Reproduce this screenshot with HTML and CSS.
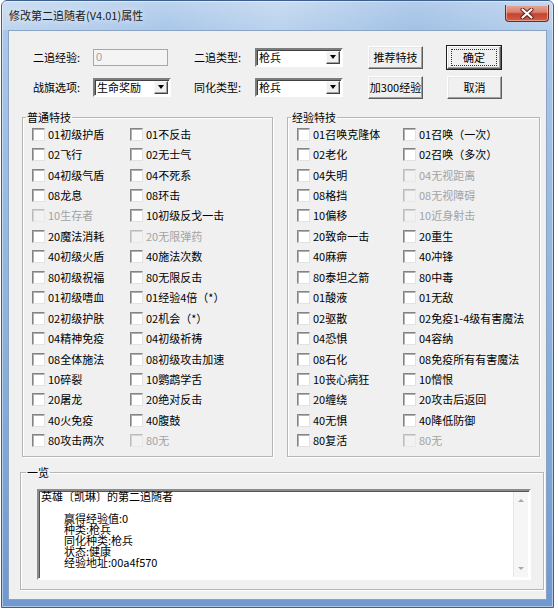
FILE: index.html
```html
<!DOCTYPE html>
<html>
<head>
    <meta charset="utf-8">
    <title>修改第二追随者(V4.01)属性</title>
    <link rel="stylesheet" href="styles.css">
</head>
<body>
<div class="window">
    <div class="titlebar">
        <span class="title">修改第二追随者(V4.01)属性</span>
        <span class="close">
            <svg width="14" height="11" viewBox="0 0 14 11">
                <path d="M2.5 1.5 L11.5 9.5 M11.5 1.5 L2.5 9.5" stroke="#5a1a12" stroke-width="4" stroke-linecap="round"/>
                <path d="M2.5 1.5 L11.5 9.5 M11.5 1.5 L2.5 9.5" stroke="#fff" stroke-width="2.2" stroke-linecap="round"/>
            </svg>
        </span>
    </div>

    <div class="client">
        <div class="top-rows">
            <span class="lbl">二追经验:</span>
            <div class="edit disabled">0</div>
            <span class="lbl">二追类型:</span>
            <div class="combo wide"><span class="val">枪兵</span><span class="drop"><i></i></span></div>
            <button class="btn">推荐特技</button>
            <button class="btn default"><span class="focus">确定</span></button>

            <span class="lbl">战旗选项:</span>
            <div class="combo"><span class="val">生命奖励</span><span class="drop"><i></i></span></div>
            <span class="lbl">同化类型:</span>
            <div class="combo wide"><span class="val">枪兵</span><span class="drop"><i></i></span></div>
            <button class="btn">加300经验</button>
            <button class="btn">取消</button>
        </div>

        <div class="groups">
            <fieldset class="group normal">
                <legend>普通特技</legend>
                <div class="checks">
                    <label class="chk"><span class="box"></span>01初级护盾</label>
                    <label class="chk"><span class="box"></span>01不反击</label>
                    <label class="chk"><span class="box"></span>02飞行</label>
                    <label class="chk"><span class="box"></span>02无士气</label>
                    <label class="chk"><span class="box"></span>04初级气盾</label>
                    <label class="chk"><span class="box"></span>04不死系</label>
                    <label class="chk"><span class="box"></span>08龙息</label>
                    <label class="chk"><span class="box"></span>08环击</label>
                    <label class="chk off"><span class="box"></span>10生存者</label>
                    <label class="chk"><span class="box"></span>10初级反戈一击</label>
                    <label class="chk"><span class="box"></span>20魔法消耗</label>
                    <label class="chk off"><span class="box"></span>20无限弹药</label>
                    <label class="chk"><span class="box"></span>40初级火盾</label>
                    <label class="chk"><span class="box"></span>40施法次数</label>
                    <label class="chk"><span class="box"></span>80初级祝福</label>
                    <label class="chk"><span class="box"></span>80无限反击</label>
                    <label class="chk"><span class="box"></span>01初级嗜血</label>
                    <label class="chk"><span class="box"></span>01经验4倍（*）</label>
                    <label class="chk"><span class="box"></span>02初级护肤</label>
                    <label class="chk"><span class="box"></span>02机会（*）</label>
                    <label class="chk"><span class="box"></span>04精神免疫</label>
                    <label class="chk"><span class="box"></span>04初级祈祷</label>
                    <label class="chk"><span class="box"></span>08全体施法</label>
                    <label class="chk"><span class="box"></span>08初级攻击加速</label>
                    <label class="chk"><span class="box"></span>10碎裂</label>
                    <label class="chk"><span class="box"></span>10鹦鹉学舌</label>
                    <label class="chk"><span class="box"></span>20屠龙</label>
                    <label class="chk"><span class="box"></span>20绝对反击</label>
                    <label class="chk"><span class="box"></span>40火免疫</label>
                    <label class="chk"><span class="box"></span>40腹鼓</label>
                    <label class="chk"><span class="box"></span>80攻击两次</label>
                    <label class="chk off"><span class="box"></span>80无</label>
                </div>
            </fieldset>

            <fieldset class="group exp">
                <legend>经验特技</legend>
                <div class="checks">
                    <label class="chk"><span class="box"></span>01召唤克隆体</label>
                    <label class="chk"><span class="box"></span>01召唤（一次）</label>
                    <label class="chk"><span class="box"></span>02老化</label>
                    <label class="chk"><span class="box"></span>02召唤（多次）</label>
                    <label class="chk"><span class="box"></span>04失明</label>
                    <label class="chk off"><span class="box"></span>04无视距离</label>
                    <label class="chk"><span class="box"></span>08格挡</label>
                    <label class="chk off"><span class="box"></span>08无视障碍</label>
                    <label class="chk"><span class="box"></span>10偏移</label>
                    <label class="chk off"><span class="box"></span>10近身射击</label>
                    <label class="chk"><span class="box"></span>20致命一击</label>
                    <label class="chk"><span class="box"></span>20重生</label>
                    <label class="chk"><span class="box"></span>40麻痹</label>
                    <label class="chk"><span class="box"></span>40冲锋</label>
                    <label class="chk"><span class="box"></span>80泰坦之箭</label>
                    <label class="chk"><span class="box"></span>80中毒</label>
                    <label class="chk"><span class="box"></span>01酸液</label>
                    <label class="chk"><span class="box"></span>01无敌</label>
                    <label class="chk"><span class="box"></span>02驱散</label>
                    <label class="chk"><span class="box"></span>02免疫1-4级有害魔法</label>
                    <label class="chk"><span class="box"></span>04恐惧</label>
                    <label class="chk"><span class="box"></span>04容纳</label>
                    <label class="chk"><span class="box"></span>08石化</label>
                    <label class="chk"><span class="box"></span>08免疫所有有害魔法</label>
                    <label class="chk"><span class="box"></span>10丧心病狂</label>
                    <label class="chk"><span class="box"></span>10憎恨</label>
                    <label class="chk"><span class="box"></span>20缠绕</label>
                    <label class="chk"><span class="box"></span>20攻击后返回</label>
                    <label class="chk"><span class="box"></span>40无惧</label>
                    <label class="chk"><span class="box"></span>40降低防御</label>
                    <label class="chk"><span class="box"></span>80复活</label>
                    <label class="chk off"><span class="box"></span>80无</label>
                </div>
            </fieldset>
        </div>

        <fieldset class="group summary">
            <legend>一览</legend>
            <div class="memo">
                <div class="memo-text">
                    <div>英雄〔凯琳〕的第二追随者</div>
                    <div>&nbsp;</div>
                    <div class="ind">赢得经验值:0</div>
                    <div class="ind">种类:枪兵</div>
                    <div class="ind">同化种类:枪兵</div>
                    <div class="ind">状态:健康</div>
                    <div class="ind">经验地址:00a4f570</div>
                </div>
                <div class="vscroll">
                    <span class="arr up"></span>
                    <span class="arr down"></span>
                </div>
            </div>
        </fieldset>
    </div>
</div>
</body>
</html>
```

FILE: styles.css
```css
body {
    margin: 0;
    background: #fff;
    font-family: "Noto Sans CJK SC", "Liberation Sans", sans-serif;
    font-size: 11px;
    color: #000;
}

/* window frame */
.window {
    margin-left: 1px;
    width: 539px;
    padding: 0 6px 7px 6px;
    border: 1px solid #3d5f8c;
    border-radius: 6px 6px 0 0;
    background: linear-gradient(180deg, #bcd3ee 0, #a9c7e9 30px, #8fb4de 300px, #6f99cf 100%);
    box-shadow: inset 0 0 0 1px rgba(255, 255, 255, 0.45);
}
.titlebar {
    height: 29px;
    display: flex;
    align-items: flex-start;
    justify-content: space-between;
    margin: 0 -6px;
    padding: 0 4px 0 7px;
    background: linear-gradient(90deg, rgba(255,255,255,0.25) 0, rgba(255,255,255,0) 30%, rgba(255,255,255,0.2) 50%, rgba(120,160,210,0.15) 75%, rgba(255,255,255,0.15) 100%);
}
.title {
    margin-top: 6px;
    line-height: 16px;
    color: #1a1a1a;
    text-shadow: 0 0 6px rgba(255, 255, 255, 0.9);
}
.close {
    margin-top: 4px;
    width: 42px;
    height: 16px;
    border: 1px solid #6e2a22;
    border-top: none;
    border-radius: 0 0 4px 4px;
    background: linear-gradient(180deg, #e9a798 0, #d6816e 45%, #c4432f 55%, #cf5f44 100%);
    box-shadow: inset 0 0 0 1px rgba(255, 220, 210, 0.5);
    display: flex;
    align-items: center;
    justify-content: center;
}

.client {
    height: 568px;
    background: #f0f0f0;
    border: 1px solid #8aa3c2;
}

/* top controls */
.top-rows {
    display: grid;
    grid-template-columns: 60px 101px 61px 113px 79px 54px;
    grid-auto-rows: 30px;
    align-items: center;
    padding: 11px 0 0 24px;
}
.lbl {
    color: #000;
}
.edit {
    width: 71px;
    height: 15px;
    line-height: 15px;
    padding-left: 2px;
    border: 1px solid #a8a8a8;
    background: #f4f4f4;
    font-family: "Liberation Sans", sans-serif;
}
.edit.disabled { color: #a0a0a0; }

.combo {
    width: 71px;
    height: 15px;
    border: 2px solid;
    border-color: #7c7c7c #fff #fff #7c7c7c;
    box-shadow: inset 1px 1px 0 #404040;
    background: #fff;
    display: flex;
    align-items: center;
    justify-content: space-between;
    padding: 0 1px 0 2px;
}
.combo.wide { width: 81px; }
.combo .val { line-height: 15px; }
.drop {
    width: 12px;
    height: 11px;
    border: 1px solid;
    border-color: #f8f8f8 #404040 #404040 #f8f8f8;
    box-shadow: inset -1px -1px 0 #a0a0a0;
    background: #f0f0f0;
    display: flex;
    align-items: center;
    justify-content: center;
}
.drop i {
    width: 0;
    height: 0;
    border-left: 3.5px solid transparent;
    border-right: 3.5px solid transparent;
    border-top: 4px solid #000;
}

.btn {
    width: 55px;
    height: 23px;
    padding: 0;
    font: inherit;
    color: #000;
    background: #f0f0f0;
    border: 1px solid;
    border-color: #fff #5e5e5e #5e5e5e #fff;
    box-shadow: inset -1px -1px 0 #a0a0a0, inset 1px 1px 0 #e6e6e6;
}
.btn.default {
    width: 54px;
    outline: 1px solid #1e1e1e;
    outline-offset: 0;
    display: flex;
    align-items: center;
    justify-content: center;
}
.focus {
    width: 44px;
    height: 15px;
    line-height: 15px;
    border: 1px dotted #333;
}

/* group boxes */
.group {
    margin: 0;
    padding: 0 0 5px 9px;
    border: 1px solid #b5b5b5;
    box-shadow: inset 1px 1px 0 #fff, 1px 1px 0 #fff;
}
.group legend {
    margin-left: -6px;
    padding: 0 1px;
    line-height: 13px;
}
.groups {
    display: flex;
    gap: 14px;
    margin: 9px 0 0 13px;
}
.normal { width: 240px; }
.exp { width: 242px; }

.checks {
    display: grid;
    grid-template-columns: 98px 1fr;
    grid-auto-rows: 20.45px;
    align-items: center;
}
.exp .checks { grid-template-columns: 106px 1fr; }
.chk {
    display: flex;
    align-items: center;
    gap: 3px;
    white-space: nowrap;
    line-height: 13px;
}
.box {
    width: 11px;
    height: 11px;
    border: 1px solid;
    border-color: #848484 #e2e2e2 #e2e2e2 #848484;
    box-shadow: inset 1px 1px 0 #b0b0b0;
    background: #fff;
}
.chk.off { color: #a3a3a3; }
.chk.off .box {
    background: #f2f2f2;
    border-color: #bcbcbc #e8e8e8 #e8e8e8 #bcbcbc;
    box-shadow: inset 1px 1px 0 #d4d4d4;
}

/* summary */
.summary {
    width: 494px;
    margin: 9px 0 0 11px;
    padding: 10px 12px 9px 16px;
}
.summary legend { margin-left: -11px; }
.memo {
    height: 87px;
    display: flex;
    border: 2px solid;
    border-color: #8c8c8c #fff #fff #8c8c8c;
    box-shadow: inset 1px 1px 0 #555;
    background: #fff;
}
.memo-text {
    flex: 1;
    padding: 0 0 0 2px;
    line-height: 11px;
}
.memo-text .ind { padding-left: 23px; }
.vscroll {
    width: 14px;
    margin: 1px 1px 1px 0;
    background: #f6f6f6;
    border-left: 1px solid #e6e6e6;
    display: flex;
    flex-direction: column;
    justify-content: space-between;
    align-items: center;
    padding: 7px 0;
}
.arr {
    width: 0;
    height: 0;
    border-left: 3px solid transparent;
    border-right: 3px solid transparent;
}
.arr.up { border-bottom: 3px solid #a8a8a8; }
.arr.down { border-top: 3px solid #a8a8a8; }
```
